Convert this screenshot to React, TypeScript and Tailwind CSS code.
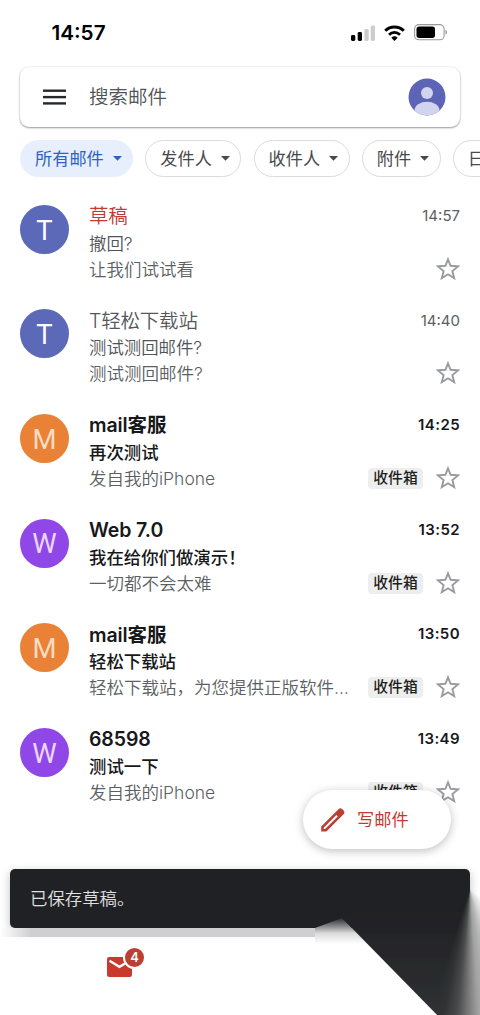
import React from "react";
import clsx from "clsx";

interface Mail {
  letter: string;
  color: string;
  sender: string;
  subject: string;
  preview: string;
  time: string;
  unread?: boolean;
  draft?: boolean;
}

const mails: Mail[] = [
  { letter: "T", color: "bg-[#5c68b8] text-[#fbfbff]", sender: "草稿", subject: "撤回?", preview: "让我们试试看", time: "14:57", draft: true },
  { letter: "T", color: "bg-[#5c68b8] text-[#fbfbff]", sender: "T轻松下载站", subject: "测试测回邮件?", preview: "测试测回邮件?", time: "14:40" },
  { letter: "M", color: "bg-[#e98136] text-[#fcdcc0]", sender: "mail客服", subject: "再次测试", preview: "发自我的iPhone", time: "14:25", unread: true },
  { letter: "W", color: "bg-[#9047e8] text-[#ecd6fd]", sender: "Web 7.0", subject: "我在给你们做演示！", preview: "一切都不会太难", time: "13:52", unread: true },
  { letter: "M", color: "bg-[#e98136] text-[#fcdcc0]", sender: "mail客服", subject: "轻松下载站", preview: "轻松下载站，为您提供正版软件…", time: "13:50", unread: true },
  { letter: "W", color: "bg-[#9047e8] text-[#ecd6fd]", sender: "68598", subject: "测试一下", preview: "发自我的iPhone", time: "13:49", unread: true },
];

const filters = ["所有邮件", "发件人", "收件人", "附件", "日期"];

const StatusBar: React.FC = () => (
  <div className="flex h-[67px] shrink-0 items-start justify-between pl-[51.5px] pr-8 pt-[20px]">
    <span className="text-[20.7px] font-semibold leading-[25px] text-black">14:57</span>
    <div className="flex items-center pt-1">
      <svg width="25" height="16" viewBox="0 0 25 16">
        <rect x="1" y="10" width="4.3" height="6" rx="1.4" />
        <rect x="7.7" y="7" width="4.3" height="9" rx="1.4" />
        <rect x="14.4" y="4" width="4.3" height="12" rx="1.4" fill="#cdcdcd" />
        <rect x="20.7" y="0.5" width="4.3" height="15.5" rx="1.4" fill="#cdcdcd" />
      </svg>
      <svg className="ml-[9px]" width="21" height="16" viewBox="0 0 21 16" fill="none" stroke="#000">
        <path d="M1.2 5.8a13.3 13.3 0 0 1 18.6 0" strokeWidth="2.9" />
        <path d="M5 9.7a7.9 7.9 0 0 1 11 0" strokeWidth="2.7" />
        <path d="M10.5 16l-3.2-3.3a4.7 4.7 0 0 1 6.4 0z" fill="#000" stroke="none" />
      </svg>
      <svg className="ml-[9px]" width="34" height="17" viewBox="0 0 34 17">
        <rect x="0.6" y="0.6" width="29.5" height="15.2" rx="4.4" fill="none" stroke="#999" strokeWidth="1.1" />
        <rect x="2.5" y="2.5" width="18.5" height="11.4" rx="2.7" />
        <path d="M31.5 5.8v5q1.6-.8 1.6-2.5t-1.6-2.5" fill="#999" />
      </svg>
    </div>
  </div>
);

const SearchBar: React.FC = () => (
  <div className="mx-5 flex h-[60px] shrink-0 items-center rounded-[9px] bg-white pl-[23px] pr-[14px] shadow-[0_1px_2px_rgba(0,0,0,0.38),0_0_2px_rgba(0,0,0,0.12)]">
    <svg width="23" height="16" viewBox="0 0 23 16" fill="#28292b">
      <rect y="0.5" width="23" height="2.4" />
      <rect y="6.9" width="23" height="2.4" />
      <rect y="13.2" width="23" height="2.4" />
    </svg>
    <span className="ml-[23px] flex-1 pt-[2px] text-[19.5px] font-[350] text-[#505357]">搜索邮件</span>
    <svg width="38" height="38" viewBox="0 0 38 38">
      <defs>
        <clipPath id="avatar">
          <circle cx="19" cy="19" r="18.3" />
        </clipPath>
      </defs>
      <circle cx="19" cy="19" r="18.5" fill="#5b64b5" />
      <g fill="#d2d4ee" clipPath="url(#avatar)">
        <circle cx="19" cy="15" r="6" />
        <ellipse cx="19" cy="32" rx="12.4" ry="8.3" />
      </g>
    </svg>
  </div>
);

const FilterChips: React.FC = () => (
  <div className="mt-[13.4px] flex h-[38px] shrink-0 gap-[12.1px] overflow-hidden pl-5">
    {filters.map((label, i) => (
      <button
        key={label}
        className={clsx(
          "flex h-[37px] shrink-0 items-center gap-[9px] whitespace-nowrap rounded-full border pl-[14px] pr-[10.5px] text-[17.2px] leading-none",
          i === 0
            ? "border-[#e8effc] bg-[#e8effc] text-[#2c63bd]"
            : "border-[#d9dbde] bg-white text-[#47494d]"
        )}
      >
        {label}
        <svg width="9" height="5" viewBox="0 0 9 5" fill="currentColor">
          <path d="M0 0h9L4.5 4.8z" />
        </svg>
      </button>
    ))}
  </div>
);

const Star: React.FC = () => (
  <svg className="mb-px shrink-0" width="24" height="24" viewBox="0 0 24 24" fill="none" stroke="#999b9f" strokeWidth="1.9">
    <path d="M12 2.3l2.6 6.5 7.4.6-5.6 4.6 1.8 7.1-6.2-3.8-6.2 3.8 1.8-7.1L2 9.4l7.4-.6z" />
  </svg>
);

const MailRow: React.FC<{ mail: Mail }> = ({ mail }) => (
  <article className="flex h-[104.6px] shrink-0 pl-5 pr-5">
    <div className={clsx("mt-[3px] flex size-[49px] shrink-0 items-center justify-center rounded-full pt-[2px] font-['Roboto',sans-serif] text-[27.5px] leading-none", mail.color)}>
      {mail.letter}
    </div>
    <div className="ml-5 min-w-0 flex-1">
      <div className="flex h-7 items-center justify-between">
        <h3
          className={clsx(
            "pt-px text-[19.5px] leading-7",
            mail.unread ? "font-semibold tracking-[-0.1px] text-[#17181a]" : "font-[350] tracking-[-0.2px]",
            mail.draft ? "text-[#c23a2f]" : !mail.unread && "text-[#54575b]"
          )}
        >
          {mail.sender}
        </h3>
        <time className={clsx("pt-px text-[15px]", mail.unread ? "font-semibold tracking-[0.4px] text-[#17181a]" : "text-[#5b5e62]")}>
          {mail.time}
        </time>
      </div>
      <p className={clsx("h-[27px] text-[17.4px] leading-[28px]", mail.unread ? "font-medium text-[#17181a]" : "font-[350] text-[#505357]")}>
        {mail.subject}
      </p>
      <div className="flex h-[25px] items-center">
        <p className="flex-1 whitespace-nowrap text-[17.5px] font-[350] leading-[25px] text-[#5c5f63]">{mail.preview}</p>
        {mail.unread && (
          <span className="mr-[13px] h-[21px] w-[55px] shrink-0 rounded-[4px] bg-[#eeeeee] text-center text-[14.8px] font-medium leading-[21px] text-[#1d1e20]">
            收件箱
          </span>
        )}
        <Star />
      </div>
    </div>
  </article>
);

const ComposeButton: React.FC = () => (
  <button className="absolute left-[303px] top-[790px] flex h-[59px] w-[148px] items-center rounded-full bg-white pl-[17px] text-[17.2px] text-[#c23a2f] shadow-[0_2px_10px_rgba(0,0,0,0.26)]">
    <svg width="26" height="26" viewBox="0 0 26 26">
      <path
        fill="#bd3d31"
        fillRule="evenodd"
        d="M1.2 19.5L18.7 2q1.7-1.5 3.4 0l1.7 1.7q1.5 1.7 0 3.4L6.4 24.5H1.2zM3.7 20.7v1.4h1.4L17.8 9.4 16.3 7.9z"
      />
    </svg>
    <span className="ml-[11px]">写邮件</span>
  </button>
);

const Snackbar: React.FC = () => (
  <div className="absolute left-[10px] top-[869px] flex h-[59px] w-[460px] items-center rounded-[5px] bg-[#202124] pl-5 pt-px text-[17.4px] font-[350] text-[#e0e0e1] shadow-[0_3px_10px_rgba(0,0,0,0.25)]">
    已保存草稿。
  </div>
);

// Dark page fold in the bottom right corner
const CornerFold: React.FC = () => (
  <div className="absolute bottom-0 right-0 h-[126px] w-[180px] overflow-hidden">
    <svg className="absolute bottom-0 left-0" width="180" height="115" viewBox="0 0 180 115">
      <defs>
        <linearGradient id="fold" x1="0" y1="0" x2="0" y2="1">
          <stop offset="0" stopColor="#202124" />
          <stop offset="1" stopColor="#303233" />
        </linearGradient>
        <linearGradient id="lip" x1="0" y1="17" x2="0" y2="44" gradientUnits="userSpaceOnUse">
          <stop offset="0" stopColor="#202124" />
          <stop offset="0.35" stopColor="#8a8a8c" />
          <stop offset="0.6" stopColor="#dadada" />
          <stop offset="1" stopColor="#fff" />
        </linearGradient>
        <filter id="soft" x="-10%" y="-10%" width="120%" height="120%">
          <feGaussianBlur stdDeviation="0.7" />
        </filter>
      </defs>
      <path d="M15 28L42 18 138 115H15z" fill="url(#lip)" filter="url(#soft)" />
      <path d="M15 60H80L136 115H15z" fill="#fff" />
      <path d="M42 18L60 12H170V120H142z" fill="url(#fold)" filter="url(#soft)" />
    </svg>
    <div className="absolute right-0 top-0 h-full w-10 bg-[conic-gradient(from_0deg_at_30px_0px,transparent_130deg,#d8d8d8_158deg,#b4b4b4_170deg,#a2a2a2_176deg,#777_181deg,#484a4b_186deg,#303233_192deg,transparent_198deg)]" />
  </div>
);

const BottomNav: React.FC = () => (
  <nav className="absolute bottom-0 left-0 h-[78px] w-full bg-white pl-[106px] pt-[10px] shadow-[0_-1px_2px_rgba(0,0,0,0.08)]">
    <div className="relative h-[31px] w-[40px]">
      <svg className="absolute left-0 top-[9px]" width="27" height="22" viewBox="0 0 27 22">
        <rect x="1" y="1" width="25" height="20" rx="2.2" fill="#c73a2d" />
        <path d="M3.5 4.7l10 6.1 10-6.1" fill="none" stroke="#fff" strokeWidth="2.3" />
      </svg>
      <span className="absolute left-[17px] top-[-1px] flex size-[23px] items-center justify-center rounded-full border-2 border-white bg-[#bd3e32] text-[13px] font-semibold leading-none text-white">
        4
      </span>
    </div>
  </nav>
);

const App: React.FC = () => {
  return (
    <main
      lang="zh-CN"
      className="relative flex h-[1015px] w-[480px] flex-col overflow-hidden bg-white font-[Inter,'Noto_Sans_CJK_SC',sans-serif]"
    >
      <StatusBar />
      <SearchBar />
      <FilterChips />
      <section className="mt-[23.4px] flex flex-col">
        {mails.map((mail) => (
          <MailRow key={mail.time} mail={mail} />
        ))}
      </section>
      <ComposeButton />
      <BottomNav />
      <Snackbar />
      <div className="absolute left-0 top-[928px] h-[9px] w-[315px] bg-gradient-to-r from-white via-[#cfcfd1] via-10% to-[#cfcfd1]" />
      <CornerFold />
    </main>
  );
};

export default App;
